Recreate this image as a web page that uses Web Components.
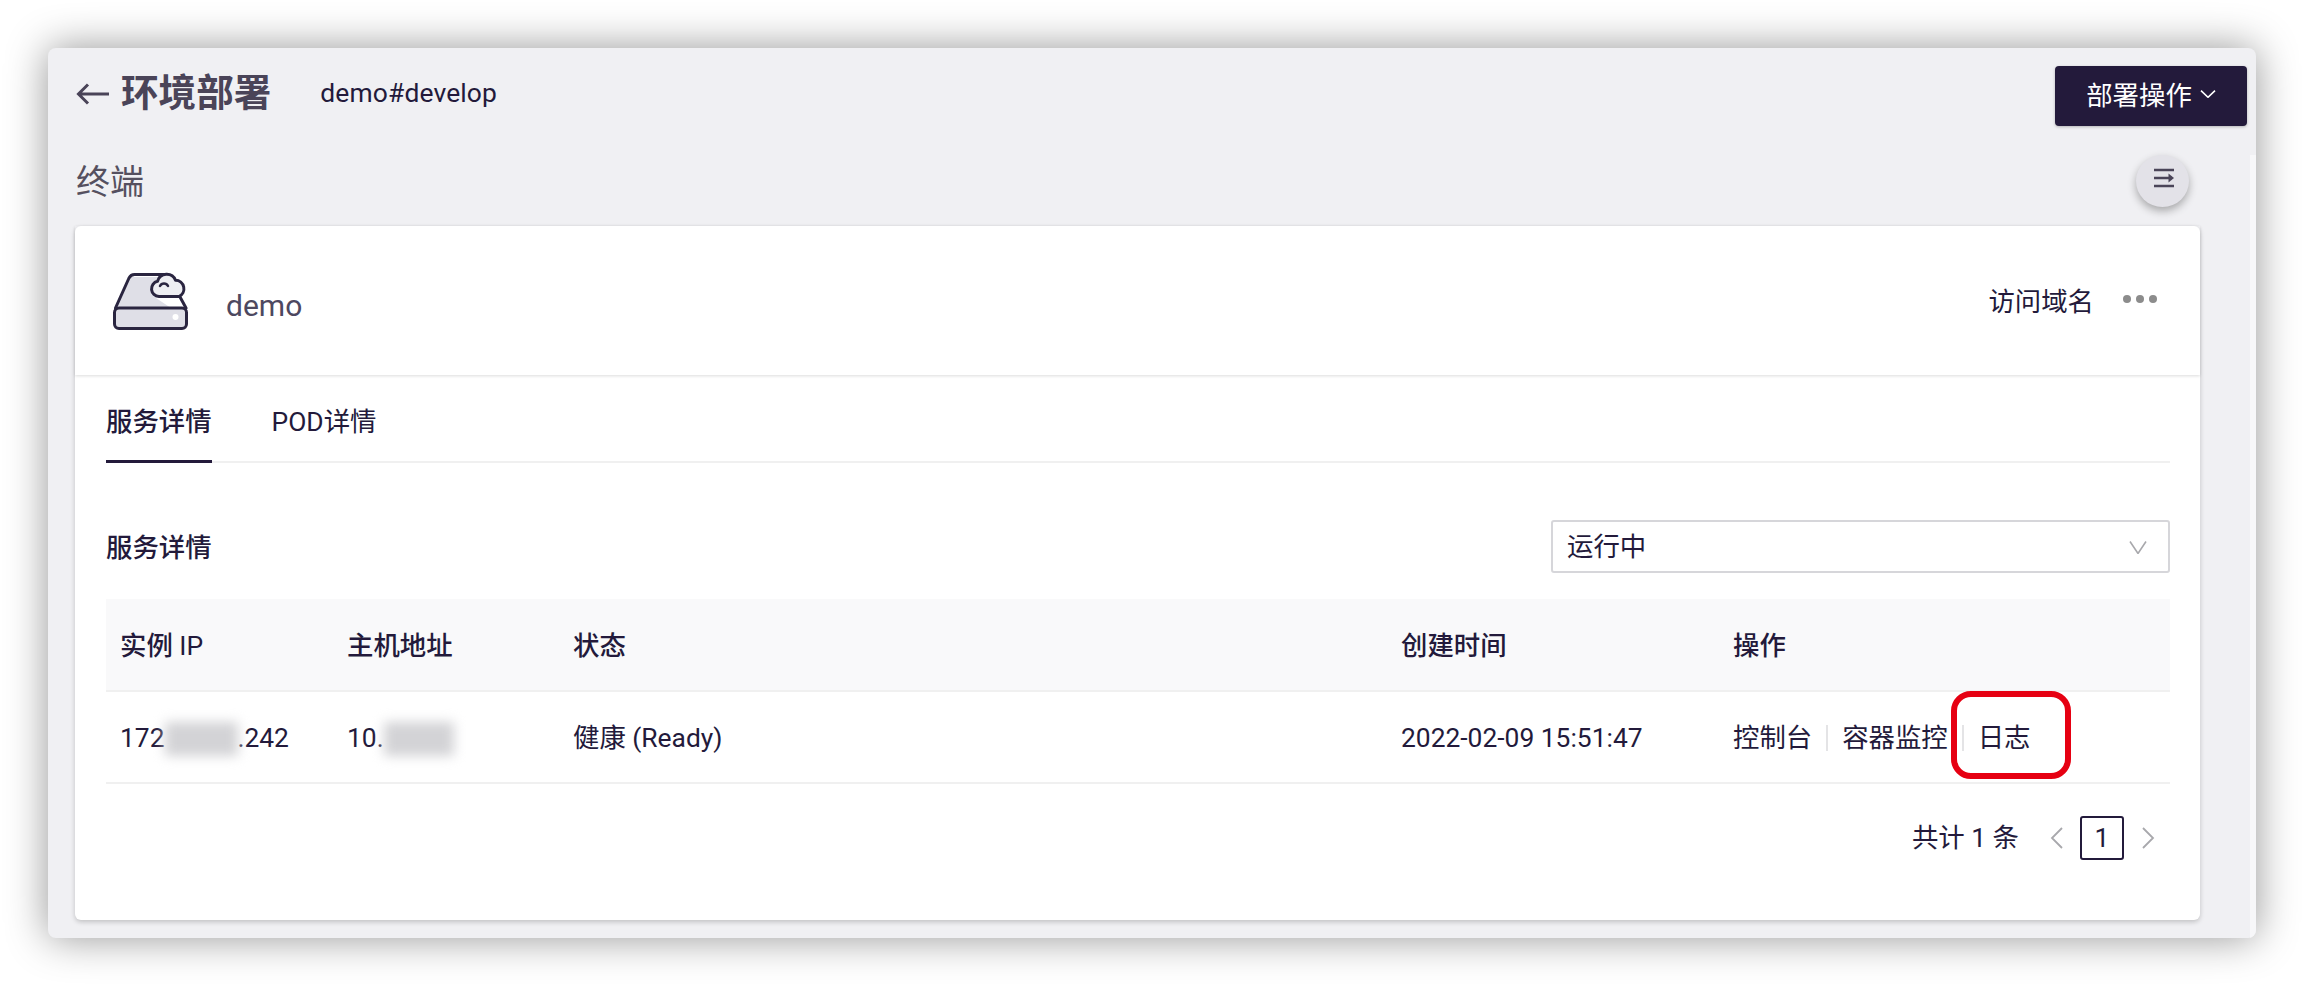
<!DOCTYPE html>
<html lang="zh">
<head>
<meta charset="utf-8">
<title>环境部署</title>
<style>
    html, body {
        margin: 0;
        background: #fff;
    }

    body {
        padding: 48px;
        height: 986px;
        box-sizing: border-box;
        overflow: hidden;
        font-family: Roboto, "Noto Sans CJK SC", sans-serif;
        font-size: 26.4px;
        line-height: 38px;
        color: #231a3b;
    }
</style>
</head>
<body>
<app-window>
    <page-header title-text="环境部署" sub-text="demo#develop" action-text="部署操作"></page-header>
    <section-head>终端</section-head>
    <server-card name="demo">
        <tab-bar>
            <tab-item active>服务详情</tab-item>
            <tab-item>POD详情</tab-item>
        </tab-bar>
        <filter-row heading="服务详情" value="运行中"></filter-row>
        <instance-table></instance-table>
        <page-nav total="共计 1 条" current="1"></page-nav>
    </server-card>
</app-window>

<script>
(() => {
    const define = (name, html, attrs = []) => {
        customElements.define(name, class extends HTMLElement {
            constructor() {
                super()
                let markup = html
                attrs.forEach((attr) => {
                    markup = markup.replaceAll(`{{${attr}}}`, this.getAttribute(attr) || "")
                })
                this.attachShadow({ mode: "open" }).innerHTML = markup
            }
        })
    }

    define("app-window", `
        <style>
            :host {
                display: block;
                position: relative;
                width: 2208px;
                height: 890px;
                box-sizing: border-box;
                border-radius: 8px;
                background: #f0f0f3;
                box-shadow: 0 0 42px rgba(0, 0, 0, .42);
                overflow: hidden;
            }

            .track {
                position: absolute;
                top: 107px;
                bottom: 0;
                right: 0;
                width: 6px;
                background: #f7f7f9;
            }
        </style>
        <slot></slot>
        <div class="track"></div>
    `)

    define("page-header", `
        <style>
            :host {
                display: flex;
                align-items: center;
                padding: 18px 9px 0 28px;
            }

            .back {
                width: 34px;
                height: 26px;
                margin: 0 11px 4px 0;
            }

            h1 {
                margin: 0 0 6px;
                font-size: 37.6px;
                font-weight: 700;
                color: #4a4458;
                line-height: 54px;
            }

            .sub {
                margin: 0 0 6px 49px;
                letter-spacing: .15px;
                color: #231a3b;
            }

            button {
                margin-left: auto;
                width: 192px;
                height: 60px;
                padding: 0;
                display: flex;
                align-items: center;
                justify-content: center;
                gap: 8px;
                border: 0;
                border-radius: 4px;
                background: #231a3b;
                color: #fff;
                font: inherit;
                box-shadow: 0 1px 3px rgba(0, 0, 0, .25);
            }

            button svg {
                width: 16px;
                height: 8px;
                margin: 0 0 4px;
            }
        </style>
        <svg class="back" viewBox="0 0 34 26" fill="none" stroke="#4a4458" stroke-width="3">
            <path d="M33 13H3M12 3.500L2.500 13l9.500 9.500"/>
        </svg>
        <h1>{{title-text}}</h1>
        <span class="sub">{{sub-text}}</span>
        <button>{{action-text}}
            <svg viewBox="0 0 16 8" fill="none" stroke="#fff" stroke-width="1.6"><path d="M1 .7l7 6.6 7-6.6"/></svg>
        </button>
    `, ["title-text", "sub-text", "action-text"])

    define("section-head", `
        <style>
            :host {
                display: flex;
                align-items: center;
                justify-content: space-between;
                height: 52px;
                margin: 29px 67px 19px 28px;
                font-size: 34px;
                color: #55505f;
            }

            span {
                margin-top: 1px;
            }

            .fab {
                width: 53px;
                height: 52px;
                display: flex;
                align-items: center;
                justify-content: center;
                border-radius: 50%;
                background: #e3e2e8;
                box-shadow: 0 4px 8px rgba(0, 0, 0, .3);
            }

            svg {
                width: 22px;
                height: 20px;
                margin-bottom: 6px;
            }
        </style>
        <span><slot></slot></span>
        <div class="fab">
            <svg viewBox="0 0 22 20" fill="none" stroke="#4a4458" stroke-width="2.300">
                <path d="M2 2h20M2 10h18M2 18h20"/>
                <path d="M16.500 5.500l5.500 4.500-5.500 4.500z" fill="#4a4458" stroke="none"/>
            </svg>
        </div>
    `)

    define("server-card", `
        <style>
            :host {
                display: block;
                width: 2125px;
                height: 694px;
                margin-left: 27px;
                box-sizing: border-box;
                border-radius: 6px;
                background: #fff;
                box-shadow: 0 2px 5px rgba(0, 0, 0, .2);
            }

            header {
                display: flex;
                align-items: center;
                height: 149px;
                box-sizing: border-box;
                padding: 0 43px 0 38px;
                box-shadow: 0 1px 3px rgba(0, 0, 0, .14);
            }

            .name {
                margin: 10px 0 0 38px;
                font-size: 30px;
                color: #4d4860;
            }

            .link {
                margin: 2px 0 0 auto;
            }

            .dots {
                display: flex;
                gap: 5px;
                margin: 0 0 3px 29px;
            }

            .dots i {
                width: 8px;
                height: 8px;
                border-radius: 50%;
                background: #8c8c8c;
            }

            .body {
                padding: 0 30px 0 31px;
            }

            svg {
                width: 75px;
                height: 58px;
            }
        </style>
        <header>
            <svg viewBox="0 0 75 58" stroke="#2a2540" stroke-width="3" stroke-linejoin="round" stroke-linecap="round">
                <path d="M3 36L17 5h43l12 31z" fill="#dfdfe7" stroke="none"/>
                <path d="M43 26h23l6 10H58z" fill="#fff" stroke="none"/>
                <path d="M2.500 36L16 6q1.800-3.500 5.500-3.500H52M66.500 24L73 36" fill="none"/>
                <rect x="1.500" y="36" width="72" height="20.500" rx="4.500" fill="#dfdfe7"/>
                <circle cx="62.500" cy="45" r="3" fill="#fff" stroke="none"/>
                <path d="M46 24.500a7.700 7.700 0 0 1-1.500-15.200 9.500 9.500 0 0 1 18-1 8.500 8.500 0 0 1 3.500 16.200z" fill="#eeeef2"/>
                <path d="M47 14a4.500 4.500 0 0 1 8 0" fill="none" stroke-width="2.500"/>
            </svg>
            <span class="name">{{name}}</span>
            <span class="link">访问域名</span>
            <div class="dots"><i></i><i></i><i></i></div>
        </header>
        <div class="body"><slot></slot></div>
    `, ["name"])

    define("tab-bar", `
        <style>
            :host {
                display: flex;
                gap: 60px;
                height: 88px;
                box-sizing: border-box;
                border-bottom: 2px solid #f0f0f0;
            }
        </style>
        <slot></slot>
    `)

    define("tab-item", `
        <style>
            :host {
                display: block;
                height: 88px;
                box-sizing: border-box;
                padding-top: 28px;
            }

            :host([active]) {
                font-weight: 500;
                border-bottom: 3px solid #231a3b;
            }
        </style>
        <slot></slot>
    `)

    define("filter-row", `
        <style>
            :host {
                display: flex;
                align-items: center;
                justify-content: space-between;
                margin-top: 57px;
            }

            h2 {
                margin: 3px 0 0;
                font-size: inherit;
                font-weight: 500;
            }

            .select {
                display: flex;
                align-items: center;
                justify-content: space-between;
                width: 619px;
                height: 53px;
                box-sizing: border-box;
                padding: 1px 21px 0 14px;
                border: 2px solid #d6d6da;
                border-radius: 3px;
            }

            svg {
                width: 18px;
                height: 13px;
            }
        </style>
        <h2>{{heading}}</h2>
        <div class="select">
            <span>{{value}}</span>
            <svg viewBox="0 0 18 13" fill="none" stroke="#a8a8ac" stroke-width="1.600"><path d="M1 .5l8 12 8-12"/></svg>
        </div>
    `, ["heading", "value"])

    define("instance-table", `
        <style>
            :host {
                display: block;
                margin-top: 26px;
            }

            .row {
                display: grid;
                grid-template-columns: 227px 226px 828px 332px 1fr;
                align-items: center;
                box-sizing: border-box;
                border-bottom: 2px solid #f0f0f0;
            }

            .row > div {
                padding-left: 14px;
            }

            .head {
                height: 93px;
                padding-top: 2px;
                background: #f9f9fa;
                font-weight: 500;
            }

            .head em {
                font-style: normal;
                font-weight: 400;
            }

            .cells {
                height: 92px;
                padding-top: 1px;
            }

            .blur {
                display: inline-block;
                height: 34px;
                vertical-align: -9px;
                background: #d3d3d6;
                filter: blur(6px);
            }

            .actions {
                display: flex;
                align-items: center;
            }

            .actions span {
                position: relative;
            }

            .actions i {
                width: 2px;
                height: 26px;
                margin: 0 14px;
                background: #e4e4e6;
            }

            .mark {
                position: absolute;
                left: -27px;
                top: 50%;
                width: 120px;
                height: 88px;
                margin-top: -47px;
                box-sizing: border-box;
                border: 6px solid #e60012;
                border-radius: 20px;
            }
        </style>
        <div class="row head">
            <div>实例 <em>IP</em></div>
            <div>主机地址</div>
            <div>状态</div>
            <div>创建时间</div>
            <div>操作</div>
        </div>
        <div class="row cells">
            <div>172<span class="blur" style="width: 73px"></span>.242</div>
            <div>10.<span class="blur" style="width: 70px"></span></div>
            <div>健康 (Ready)</div>
            <div>2022-02-09 15:51:47</div>
            <div class="actions">
                <span>控制台</span><i></i>
                <span>容器监控</span><i></i>
                <span>日志<b class="mark"></b></span>
            </div>
        </div>
    `)

    define("page-nav", `
        <style>
            :host {
                display: flex;
                align-items: center;
                justify-content: flex-end;
                margin-top: 32px;
                padding-right: 15px;
            }

            svg {
                width: 13px;
                height: 22px;
            }

            .prev {
                margin: 0 17px 0 31px;
            }

            .next {
                margin-left: 18px;
            }

            .page {
                display: flex;
                align-items: center;
                justify-content: center;
                width: 44px;
                height: 44px;
                box-sizing: border-box;
                border: 2px solid #231a3b;
                border-radius: 3px;
            }
        </style>
        <span>{{total}}</span>
        <svg class="prev" viewBox="0 0 13 22" fill="none" stroke="#a8a8ac" stroke-width="1.800"><path d="M12 1L2 11l10 10"/></svg>
        <div class="page">{{current}}</div>
        <svg class="next" viewBox="0 0 13 22" fill="none" stroke="#a8a8ac" stroke-width="1.800"><path d="M1 1l10 10L1 21"/></svg>
    `, ["total", "current"])
})()
</script>
</body>
</html>
